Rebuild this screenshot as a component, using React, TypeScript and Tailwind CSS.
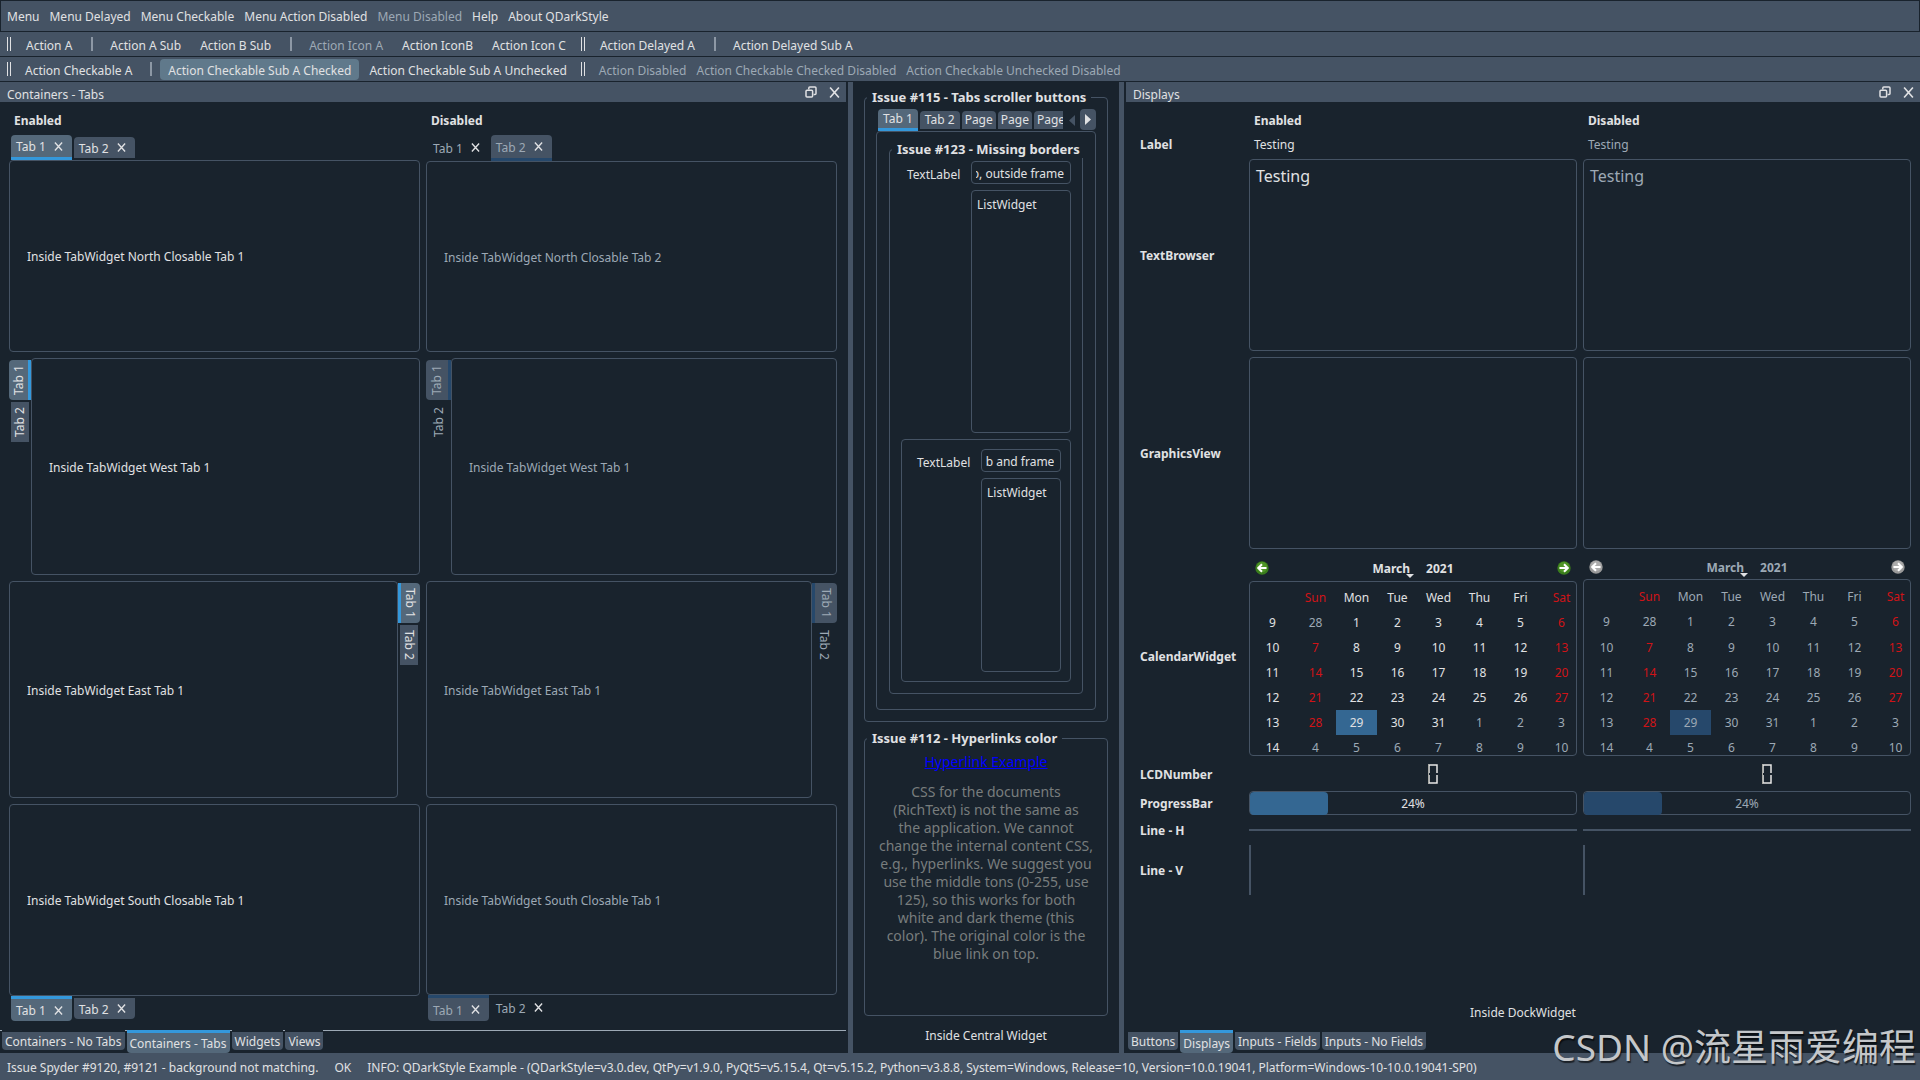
import React, { useEffect, useRef } from "react";

const pane = "border border-[#455364] rounded";
const center = "flex items-center";

function Handle() {
  return <span className="ml-1 mr-1 h-3.5 w-1 shrink-0 border-x border-[#e0e1e3] first:ml-0" />;
}

function Separator() {
  return <span className="ml-2 mr-1.5 h-3.5 w-0.5 shrink-0 bg-[#8d98a5]" />;
}

function Action({
  label,
  disabled,
  checked,
  tight,
}: {
  label: string;
  disabled?: boolean;
  checked?: boolean;
  tight?: boolean;
}) {
  return (
    <button
      disabled={disabled}
      aria-pressed={checked}
      className={
        "h-[21px] shrink-0 rounded leading-[23px] disabled:text-[#9da9b5] " +
        (tight ? "px-1 " : "px-2 ") +
        (checked ? "bg-[#60798b]" : "")
      }
    >
      {label}
    </button>
  );
}

function ToolBar({ gap, children }: { gap: string; children: React.ReactNode }) {
  return (
    <div
      role="toolbar"
      className={"flex h-[25px] shrink-0 items-center overflow-hidden border-b border-[#19232d] bg-[#455364] pl-[7px] " + gap}
    >
      {children}
    </div>
  );
}

function RestoreIcon() {
  return (
    <svg viewBox="0 0 12 12" className="size-3" fill="none" stroke="#e0e1e3" strokeWidth="1.5">
      <rect x="1" y="4.2" width="6.6" height="6.8" rx="1" />
      <path d="M3.8 3.4V2a1 1 0 0 1 1-1H10a1 1 0 0 1 1 1v5.600a1 1 0 0 1-1 1H8.600" />
    </svg>
  );
}

function CrossIcon({ className }: { className: string }) {
  return (
    <svg viewBox="0 0 10 10" className={className} fill="none" stroke="#e0e1e3" strokeWidth="1.5">
      <path d="M1 0.500 9 9.500M9 0.500 1 9.500" />
    </svg>
  );
}

function DockTitle({ title }: { title: string }) {
  return (
    <div className="flex h-5 shrink-0 items-start justify-between overflow-hidden bg-[#455364] pl-[7px] pr-1.5">
      <h2 className="mt-1 leading-[18px]">{title}</h2>
      <div className="mt-1 flex gap-3">
        <button aria-label={"Float " + title}>
          <RestoreIcon />
        </button>
        <button aria-label={"Close " + title}>
          <CrossIcon className="size-[11px]" />
        </button>
      </div>
    </div>
  );
}

function DockTabs({ tabs, active, line }: { tabs: string[]; active: number; line?: boolean }) {
  return (
    <div className="flex h-[23px] shrink-0 items-start">
      {tabs.map((t, i) => (
        <React.Fragment key={t}>
          <span className={"h-px w-0.5 " + (line ? "bg-[#9da9b5]" : "")} />
          {i === active ? (
            <button className="h-[23px] rounded-b border-t-[3px] border-[#3498db] bg-[#54687a] px-[3px] leading-[22px]">{t}</button>
          ) : (
            <button className="mt-0.5 h-[18px] rounded-b bg-[#455364] px-[3px] leading-5">{t}</button>
          )}
        </React.Fragment>
      ))}
      {line && <span className="h-px grow bg-[#9da9b5]" />}
    </div>
  );
}

type Side = "north" | "south";

function ClosableTab({ label, selected, disabled, side }: { label: string; selected: boolean; disabled: boolean; side: Side }) {
  const north = side === "north";
  let box = "flex items-center gap-2 px-[5px] ";
  if (selected) {
    box += north ? "rounded-t border-b-[3px] " : "rounded-b border-t-[3px] ";
    box += disabled
      ? "h-full border-[#26486b] bg-[#455364]"
      : "h-full border-[#3498db] bg-[#54687a]";
  } else {
    box += "mt-0.5 h-[21px] " + (north ? "rounded-t " : "rounded-b ") + (disabled ? "" : "bg-[#455364]");
  }
  return (
    <div className={box}>
      <button disabled={disabled} className="pt-0.5 leading-[18px] disabled:text-[#9da9b5]">
        {label}
      </button>
      <button disabled={disabled} aria-label={"Close " + label}>
        <CrossIcon className="mr-1 size-[9px]" />
      </button>
    </div>
  );
}

function HorizontalTabs({ side, disabled = false, active, text }: { side: Side; disabled?: boolean; active: number; text: string }) {
  const bar = (
    <div className={"flex gap-0.5 pl-0.5 " + (disabled ? "h-[26px]" : "h-[25px]")}>
      {["Tab 1", "Tab 2"].map((t, i) => (
        <ClosableTab key={t} label={t} selected={i === active} disabled={disabled} side={side} />
      ))}
    </div>
  );
  return (
    <div className="flex min-h-0 min-w-0 flex-col">
      {side === "north" && bar}
      <div className={`${pane} ${center} grow pl-[17px] pt-0.5 ${disabled ? "text-[#9da9b5]" : ""}`}>{text}</div>
      {side === "south" && bar}
    </div>
  );
}

function VerticalTabs({ side, disabled = false, text }: { side: "west" | "east"; disabled?: boolean; text: string }) {
  const west = side === "west";
  const turn = "[writing-mode:vertical-rl] text-center " + (west ? "rotate-180 " : "");
  const bar = (
    <div className={`flex flex-col gap-0.5 pt-0.5 ${disabled ? "w-[25px]" : "w-[22px]"}`}>
      <button
        disabled={disabled}
        className={
          turn +
          "h-10 w-full rounded-r border-l-[3px] " +
          (disabled ? "border-[#26486b] bg-[#455364] text-[#9da9b5] leading-[22px]" : "border-[#3498db] bg-[#54687a] leading-[19px]")
        }
      >
        Tab 1
      </button>
      <button
        disabled={disabled}
        className={turn + "h-10 " + (disabled ? "w-full text-[#9da9b5] leading-[25px]" : "ml-0.5 w-[18px] bg-[#455364] leading-[18px]")}
      >
        Tab 2
      </button>
    </div>
  );
  return (
    <div className="flex min-h-0 min-w-0">
      {west && bar}
      <div className={`${pane} ${center} grow pl-[17px] pt-0.5 ${disabled ? "text-[#9da9b5]" : ""}`}>{text}</div>
      {!west && bar}
    </div>
  );
}

function ContainersDock() {
  return (
    <section className="mr-0.5 flex min-h-0 min-w-0 flex-col">
      <DockTitle title="Containers - Tabs" />
      <div className="grid min-h-0 grow grid-cols-2 grid-rows-[18px_1fr_1fr_1fr_1fr] gap-1.5 p-[9px]">
        <h3 className="pl-[5px] font-bold leading-5">Enabled</h3>
        <h3 className="pl-[5px] font-bold leading-5">Disabled</h3>
        <HorizontalTabs side="north" active={0} text="Inside TabWidget North Closable Tab 1" />
        <HorizontalTabs side="north" active={1} disabled text="Inside TabWidget North Closable Tab 2" />
        <VerticalTabs side="west" text="Inside TabWidget West Tab 1" />
        <VerticalTabs side="west" disabled text="Inside TabWidget West Tab 1" />
        <VerticalTabs side="east" text="Inside TabWidget East Tab 1" />
        <VerticalTabs side="east" disabled text="Inside TabWidget East Tab 1" />
        <HorizontalTabs side="south" active={0} text="Inside TabWidget South Closable Tab 1" />
        <HorizontalTabs side="south" active={0} disabled text="Inside TabWidget South Closable Tab 1" />
      </div>
      <DockTabs tabs={["Containers - No Tabs", "Containers - Tabs", "Widgets", "Views"]} active={1} line />
    </section>
  );
}

function LabelledList({ id, value }: { id: string; value: string }) {
  const field = useRef<HTMLInputElement>(null);
  useEffect(() => {
    if (field.current) field.current.scrollLeft = field.current.scrollWidth;
  }, []);
  return (
    <div className="grid min-h-0 min-w-0 grow basis-0 grid-cols-[64px_minmax(0,1fr)] grid-rows-[23px_1fr] gap-1.5">
      <label htmlFor={id} className="pl-1.5 leading-[27px]">
        TextLabel
      </label>
      <input id={id} ref={field} defaultValue={value} className={`${pane} w-full bg-transparent pl-1 pr-1.5 pt-0.5 outline-none`} />
      <ul className={`${pane} col-start-2 px-[5px] py-1 leading-5`}>
        <li>ListWidget</li>
      </ul>
    </div>
  );
}

const legend = "-ml-[9px] h-[18px] px-[5px] text-left text-[13px] font-bold leading-[18px] whitespace-nowrap";

function CentralWidget() {
  return (
    <main className="flex min-h-0 min-w-0 flex-col px-[11px] pb-2 pt-1.5">
      <fieldset className={`${pane} flex min-h-0 min-w-0 grow flex-col px-[11px] pb-[11px] pt-[3px]`}>
        <legend className={legend}>Issue #115 - Tabs scroller buttons</legend>
        <div className="flex h-[22px] shrink-0 pl-0.5">
          <div className="flex min-w-0 grow basis-0 gap-0.5 overflow-hidden">
            <button className="h-[22px] shrink-0 rounded-t border-b-[3px] border-[#3498db] bg-[#54687a] px-[5px] leading-5">
              Tab 1
            </button>
            <button className="mt-0.5 h-[18px] shrink-0 rounded-t bg-[#455364] px-[5px] leading-[18px]">Tab 2</button>
            {[3, 4, 5].map((n) => (
              <button key={n} className="mt-0.5 h-[18px] shrink-0 rounded-t bg-[#455364] px-[3px] leading-[18px]">
                Page
              </button>
            ))}
          </div>
          <button disabled aria-label="Scroll left" className="flex w-[17px] items-center justify-center">
            <svg viewBox="0 0 6 11" className="h-[11px] w-1.5" fill="#455364">
              <path d="M6 0v11L0 5.500z" />
            </svg>
          </button>
          <button aria-label="Scroll right" className="flex h-[21px] w-4 items-center justify-center rounded bg-[#455364]">
            <svg viewBox="0 0 6 11" className="h-[11px] w-1.5" fill="#e0e1e3">
              <path d="M0 0v11l6-5.500z" />
            </svg>
          </button>
        </div>
        <div className={`${pane} flex min-h-0 grow flex-col px-3 pb-[15px] pt-2`}>
          <fieldset className={`${pane} flex min-h-0 min-w-0 grow flex-col px-[11px] pb-[11px] pt-[3px]`}>
            <legend className={legend}>Issue #123 - Missing borders</legend>
            <div className="flex h-full min-h-0 flex-col gap-1.5">
              <div className="flex min-h-0 grow-[271] basis-0">
                <LabelledList id="outside" value="Inside tab, outside frame" />
              </div>
              <div className={`${pane} flex min-h-0 grow-[222] basis-0 p-[9px]`}>
                <LabelledList id="inside" value="Inside tab and frame" />
              </div>
            </div>
          </fieldset>
        </div>
      </fieldset>
      <fieldset className={`${pane} mt-[7px] h-[287px] min-w-0 shrink-0 px-[11px] pt-1.5 text-center text-[14px] leading-[18px]`}>
        <legend className={legend}>Issue #112 - Hyperlinks color</legend>
        <p>
          <a href="#hyperlink" className="text-[#0000ff] underline">
            Hyperlink Example
          </a>
        </p>
        <p className="mt-3 whitespace-nowrap text-[#787d7d]">
          CSS for the documents
          <br />
          (RichText) is not the same as
          <br />
          the application. We cannot
          <br />
          change the internal content CSS,
          <br />
          e.g., hyperlinks. We suggest you
          <br />
          use the middle tons (0-255, use
          <br />
          125), so this works for both
          <br />
          white and dark theme (this
          <br />
          color). The original color is the
          <br />
          blue link on top.
        </p>
      </fieldset>
      <p className="mt-[11px] text-center leading-[18px]">Inside Central Widget</p>
    </main>
  );
}

const DAYS = ["Sun", "Mon", "Tue", "Wed", "Thu", "Fri", "Sat"];
const WEEKS = [
  { week: 9, days: [28, 1, 2, 3, 4, 5, 6] },
  { week: 10, days: [7, 8, 9, 10, 11, 12, 13] },
  { week: 11, days: [14, 15, 16, 17, 18, 19, 20] },
  { week: 12, days: [21, 22, 23, 24, 25, 26, 27] },
  { week: 13, days: [28, 29, 30, 31, 1, 2, 3] },
  { week: 14, days: [4, 5, 6, 7, 8, 9, 10] },
];

function RoundArrow({ flip, disabled }: { flip?: boolean; disabled?: boolean }) {
  return (
    <svg viewBox="0 0 14 14" className={"size-3.5 " + (flip ? "-scale-x-100" : "")}>
      <circle cx="7" cy="7" r="6.700" fill={disabled ? "#9a9a9a" : "#3a7d1c"} />
      <circle cx="7" cy="6" r="5.200" fill={disabled ? "#b4b4b4" : "#5aa02c"} opacity="0.7" />
      <path d="M11.500 7H3.500M7 3.200 3.200 7 7 10.800" fill="none" stroke="#fff" strokeWidth="2" />
    </svg>
  );
}

function Calendar({ disabled = false }: { disabled?: boolean }) {
  const tone = (w: number, d: number, day: number) => {
    const other = (w === 0 && day > 20) || (w >= 4 && day < 20);
    if (w === 4 && day === 29) return disabled ? "bg-[#26486b] text-[#9da9b5]" : "bg-[#346792]";
    if (other || (disabled && d > 0 && d < 6)) return "text-[#9da9b5]";
    if (d === 0 || d === 6) return "text-[#d01317]";
    return "";
  };
  return (
    <div className={"flex h-[201px] min-w-0 flex-col " + (disabled ? "text-[#9da9b5]" : "")}>
      <div className={"flex shrink-0 items-center justify-between px-1.5 font-bold " + (disabled ? "h-6" : "h-[26px]")}>
        <button disabled={disabled} aria-label="Previous month">
          <RoundArrow disabled={disabled} />
        </button>
        <div className="flex pt-0.5 leading-[18px]">
          <button disabled={disabled} className="relative">
            March
            <svg viewBox="0 0 8 4" className="absolute -right-1 bottom-0 h-1 w-2" fill="#e0e1e3">
              <path d="M0 0h8L4 4z" />
            </svg>
          </button>
          <button disabled={disabled} className="ml-4">
            2021
          </button>
        </div>
        <button disabled={disabled} aria-label="Next month">
          <RoundArrow flip disabled={disabled} />
        </button>
      </div>
      <div className={`${pane} min-h-0 grow overflow-hidden`}>
        <table className="w-[calc(100%+6px)] table-fixed text-center">
          <thead>
            <tr className={disabled ? "h-[29px]" : "h-7"}>
              <th className="w-[45px]" aria-label="Week" />
              {DAYS.map((d, i) => (
                <th key={d} className={"pt-1 font-normal " + (i % 6 === 0 ? "text-[#d01317]" : "")}>
                  {d}
                </th>
              ))}
            </tr>
          </thead>
          <tbody>
            {WEEKS.map(({ week, days }, w) => (
              <tr key={week} className={disabled && w === 0 ? "h-[26px]" : "h-[25px]"}>
                <th scope="row" className="font-normal">
                  {week}
                </th>
                {days.map((day, d) => (
                  <td key={d} className={tone(w, d, day)}>
                    {day}
                  </td>
                ))}
              </tr>
            ))}
          </tbody>
        </table>
      </div>
    </div>
  );
}

function LcdZero() {
  return (
    <div className="flex h-[23px] items-center justify-center pl-10">
      <svg viewBox="0 0 10 20" className="h-5 w-2.5" role="img" aria-label="0">
        <path d="M1 9V1h8v8M1 11v8h8v-8" fill="none" stroke="#e8e8e6" strokeWidth="1.500" />
        <path d="M0.500 0v20" stroke="#a9aaa5" />
      </svg>
    </div>
  );
}

function Progress({ disabled = false }: { disabled?: boolean }) {
  return (
    <div
      role="progressbar"
      aria-label="Progress"
      aria-valuenow={24}
      className={`${pane} grid h-6 ${disabled ? "text-[#9da9b5]" : ""}`}
    >
      <span className={`col-start-1 row-start-1 w-[24%] rounded ${disabled ? "bg-[#26486b]" : "bg-[#346792]"}`} />
      <span className="z-10 col-start-1 row-start-1 text-center leading-[23px]">24%</span>
    </div>
  );
}

function RowLabel({ children }: { children: React.ReactNode }) {
  return <h3 className="h-[18px] self-center pl-[5px] font-bold leading-5">{children}</h3>;
}

function DisplaysDock() {
  const browser = `${pane} h-48 w-full resize-none bg-transparent px-1.5 py-[5px] text-[16px] leading-[22px] outline-none`;
  return (
    <section className="ml-0.5 flex min-h-0 min-w-0 flex-col">
      <DockTitle title="Displays" />
      <div className="flex min-h-0 grow flex-col p-[9px]">
        <div className="grid grid-cols-[108px_minmax(0,1fr)_minmax(0,1fr)] gap-1.5">
          <h3 className="col-start-2 h-[18px] pl-[5px] font-bold leading-5">Enabled</h3>
          <h3 className="h-[18px] pl-[5px] font-bold leading-5">Disabled</h3>

          <RowLabel>Label</RowLabel>
          <p className="h-[18px] pl-[5px] leading-5">Testing</p>
          <p className="h-[18px] pl-[5px] leading-5 text-[#9da9b5]">Testing</p>

          <RowLabel>TextBrowser</RowLabel>
          <textarea readOnly aria-label="TextBrowser" defaultValue="Testing" className={browser} />
          <textarea disabled aria-label="TextBrowser disabled" defaultValue="Testing" className={browser + " text-[#9da9b5]"} />

          <RowLabel>GraphicsView</RowLabel>
          <div className={`${pane} h-48`} />
          <div className={`${pane} h-48`} />

          <RowLabel>CalendarWidget</RowLabel>
          <Calendar />
          <Calendar disabled />

          <RowLabel>LCDNumber</RowLabel>
          <LcdZero />
          <LcdZero />

          <RowLabel>ProgressBar</RowLabel>
          <Progress />
          <Progress disabled />

          <RowLabel>Line - H</RowLabel>
          <hr className="h-0.5 self-center border-0 bg-[#455364]" />
          <hr className="h-0.5 self-center border-0 bg-[#455364]" />

          <RowLabel>Line - V</RowLabel>
          <div className="h-[50px] w-0.5 bg-[#455364]" />
          <div className="h-[50px] w-0.5 bg-[#455364]" />
        </div>
        <p className="mt-auto h-[18px] text-center leading-5">Inside DockWidget</p>
      </div>
      <DockTabs tabs={["Buttons", "Displays", "Inputs - Fields", "Inputs - No Fields"]} active={1} />
    </section>
  );
}

const MENUS = ["Menu", "Menu Delayed", "Menu Checkable", "Menu Action Disabled", "Menu Disabled", "Help", "About QDarkStyle"];

export default function App() {
  return (
    <div className="relative flex h-screen flex-col overflow-hidden bg-[#19232d] font-['Noto_Sans','Noto_Sans_CJK_SC',sans-serif] text-[12px] leading-[18px] text-[#e0e1e3]">
      <nav className="flex h-8 shrink-0 items-center gap-2.5 border border-[#19232d] bg-[#455364] pl-1.5 pt-0.5">
        {MENUS.map((m) => (
          <button key={m} disabled={m === "Menu Disabled"} className="shrink-0 disabled:text-[#9da9b5]">
            {m}
          </button>
        ))}
      </nav>
      <ToolBar gap="gap-[3px]">
        <Handle />
        <Action label="Action A" />
        <Separator />
        <Action label="Action A Sub" />
        <Action label="Action B Sub" />
        <Separator />
        <Action label="Action Icon A" disabled />
        <Action label="Action IconB" />
        <Action label="Action Icon C" />
        <Handle />
        <Action label="Action Delayed A" />
        <Separator />
        <Action label="Action Delayed Sub A" />
      </ToolBar>
      <ToolBar gap="gap-0.5">
        <Handle />
        <Action label="Action Checkable A" />
        <Separator />
        <Action label="Action Checkable Sub A Checked" checked />
        <Action label="Action Checkable Sub A Unchecked" />
        <Handle />
        <span className="w-0.5" />
        <Action label="Action Disabled" disabled tight />
        <Action label="Action Checkable Checked Disabled" disabled tight />
        <Action label="Action Checkable Unchecked Disabled" disabled tight />
      </ToolBar>

      <div className="grid min-h-0 grow grid-cols-[minmax(0,848fr)_5px_minmax(0,266fr)_5px_minmax(0,796fr)] grid-rows-[minmax(0,1fr)]">
        <ContainersDock />
        <div className="bg-[#455364]" />
        <CentralWidget />
        <div className="bg-[#455364]" />
        <DisplaysDock />
      </div>

      <footer className="flex h-[27px] shrink-0 items-center gap-4 bg-[#455364] pl-[7px] pt-0.5">
        <span>Issue Spyder #9120, #9121 - background not matching.</span>
        <span>OK</span>
        <span>
          INFO: QDarkStyle Example - (QDarkStyle=v3.0.dev, QtPy=v1.9.0, PyQt5=v5.15.4, Qt=v5.15.2, Python=v3.8.8, System=Windows,
          Release=10, Version=10.0.19041, Platform=Windows-10-10.0.19041-SP0)
        </span>
      </footer>

      <p className="pointer-events-none absolute bottom-2 right-1 whitespace-nowrap text-[37px] leading-[50px] text-[#c4c7ca] [text-shadow:1px_2px_1px_#00000099]">
        CSDN @流星雨爱编程
      </p>
    </div>
  );
}
